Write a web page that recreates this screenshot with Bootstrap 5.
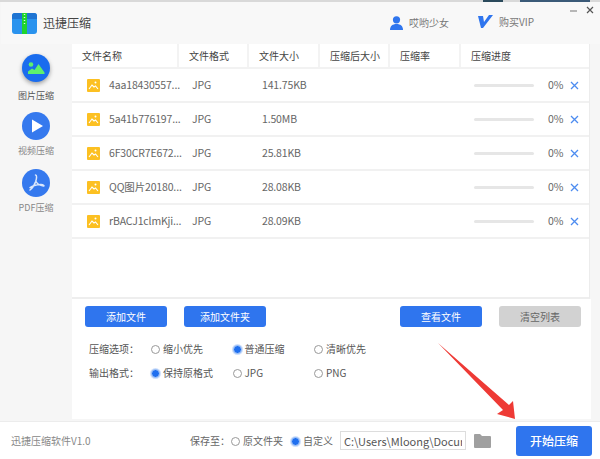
<!DOCTYPE html>
<html lang="zh">
<head>
<meta charset="utf-8">
<title>迅捷压缩</title>
<link href="https://cdn.jsdelivr.net/npm/bootstrap@5.3.0/dist/css/bootstrap.min.css" rel="stylesheet">
<style>
html,body{width:600px;height:459px;overflow:hidden;margin:0}
body{font-family:"Noto Sans CJK SC","Noto Sans",sans-serif;font-size:10px;color:#555;background:#f6f6f6;position:relative}
svg{flex-shrink:0}
.top-strip{height:2px;background:#d9d9d9}
.strip-a{width:20px;margin-left:483px;background:#2b4a5c}
.strip-b{width:70px;margin-left:17px;background:#3b5a78}
.app-win{margin-left:1px;height:457px}
.app-head{height:42px;padding-left:11px;background:#f8f8f8;position:relative}
.app-title{font-size:12px;color:#444;margin-left:6px;line-height:1}
.head-user{position:absolute;left:389px;top:14px}
.head-vip{position:absolute;left:477px;top:13px}
.head-link{font-size:10px;color:#777;margin-left:6px;line-height:1}
.win-btns{position:absolute;right:6px;top:4px}
.app-main{height:377px}
.side-bar{width:71px;background:#f6f6f6;padding-top:10px}
.side-item{height:57.5px;font-size:9px;line-height:12px;color:#888;text-align:center;margin-left:-1px}
.side-item svg{display:block;margin:0 auto 5px}
.side-item.on{color:#555}
.side-item.on svg{margin-bottom:8px;filter:drop-shadow(0 2px 2px rgba(0,0,0,.35))}
.work-col{width:518px}
.list-box{height:255px;background:#fff;border-bottom:2px solid #eee;border-right:1px solid #ececec}
.file-tbl{table-layout:fixed;width:100%;margin:0;border-collapse:collapse}
.file-tbl th,.file-tbl td{padding:0;font-weight:400;font-size:10.5px;letter-spacing:-.15px;color:#555;vertical-align:middle;box-shadow:none;background:#fff;white-space:nowrap}
.file-tbl th{height:24px;padding-left:10px;font-size:10px;letter-spacing:0;border-bottom:2px solid #f2f2f2;border-right:2px solid #f3f3f3;color:#444}
.file-tbl th:last-child{border-right:0}
.file-tbl td{height:34px;border-bottom:2px solid #f1f1f1;color:#666}
.file-tbl .c1{width:106px}.file-tbl .c2{width:70px}.file-tbl .c3{width:71px}.file-tbl .c4{width:70px}.file-tbl .c5{width:71px}
.cell-name{padding-left:15px!important}
.cell-name span{margin-left:9px}
.cell-fmt{padding-left:14px!important}
.cell-size{padding-left:14px!important}
.prog-track{width:60px;height:3px;background:#e6e6e6;border-radius:2px;margin-left:14px}
.prog-val{color:#666;margin-left:14px;width:15px}
.prog-x{margin-left:7px;display:block}
.ctrl-panel{height:120px;background:#fff;position:relative;margin-right:-1px}
.act-btn{width:82px;height:21px;padding:0;font-size:10px;line-height:21px;border:0;border-radius:3px;background:#2f75ee;color:#fff}
.act-btn:hover{background:#2f75ee;color:#fff}
.act-btn.dim,.act-btn.dim:hover{background:#d2d2d2;color:#666}
.btn-line{padding:7px 0 0 13px}
.gap-a{margin-left:17px}.gap-b{margin-left:134px}.gap-c{margin-left:17px}
.opt-line{height:24px;padding-left:17px}
.opt-first{margin-top:9px}
.opt-label{width:62px;font-size:10px;color:#555}
.opt-item{width:81.5px;font-size:10px;color:#555;margin:0;padding:0;min-height:0}
.opt-item .form-check-input,.foot-radio .form-check-input{width:9px;height:9px;float:none;margin:0 3px 0 0;border:1px solid #999;vertical-align:-1px;background-image:none}
.opt-item .form-check-input:checked,.foot-radio .form-check-input:checked{background:#1f6fef;border:1px solid #a9c8f7;box-shadow:0 0 0 1px #cfe0fb}
.app-foot{height:38px;background:#fff;border-top:1px solid #ececec;margin-left:-1px;position:relative}
.foot-ver{font-size:10px;color:#888;margin-left:11px;width:179px}
.foot-lab{font-size:10px;color:#666;width:41px;white-space:nowrap}
.foot-radio{font-size:10px;color:#666;margin:0;padding:0;min-height:0;white-space:nowrap}
.foot-r1{width:60px}.foot-r2{width:49px}
.foot-path{width:126px;height:19px;padding:0 3px;border:1px solid #ddd;border-radius:0;font-size:11px;color:#555;font-family:inherit;box-shadow:none;flex-shrink:0}
.foot-folder{margin-left:8px}
.start-btn{width:76px;height:30px;margin-left:25px;padding:0;border:0;border-radius:3px;background:#2f75ee;color:#fff;font-size:12px;font-weight:500;flex-shrink:0}
.start-btn:hover{background:#2f75ee;color:#fff}
.red-arrow{position:absolute;left:430px;top:335px;pointer-events:none}
</style>
</head>
<body>
<div class="top-strip d-flex"><div class="strip-a"></div><div class="strip-b"></div></div>
<div class="app-win d-flex flex-column">
  <header class="app-head d-flex align-items-center">
    <svg width="25" height="21" viewBox="0 0 25 21"><rect width="25" height="21" rx="3" fill="#2a93ee"/><path d="M0 3a3 3 0 0 1 3-3h19a3 3 0 0 1 3 3v3H0z" fill="#1f74d2"/><rect x="10" width="5" height="21" fill="#1fd42d"/><path d="M12.5 1v1M12.5 4v1M12.5 7v1M12.5 10v1" stroke="#d9ffd9" stroke-width="1.4"/></svg>
    <div class="app-title">迅捷压缩</div>
    <div class="head-user d-flex align-items-center">
      <svg width="13" height="14" viewBox="0 0 13 14"><circle cx="6.5" cy="3.8" r="3.6" fill="#2f75ee"/><path d="M0 14c0-4 2.500-6 6.500-6s6.500 2 6.500 6z" fill="#2f75ee"/></svg>
      <span class="head-link">哎哟少女</span>
    </div>
    <div class="head-vip d-flex align-items-center">
      <svg width="15" height="13" viewBox="0 0 15 13"><path d="M0 1h5l1 6 5-7h4L5 13H3z" fill="#2f75ee"/></svg>
      <span class="head-link">购买VIP</span>
    </div>
    <div class="win-btns d-flex align-items-center gap-2">
      <svg width="8" height="8" viewBox="0 0 8 8"><path d="M0 5h7" stroke="#777" stroke-width="1"/></svg>
      <svg width="8" height="8" viewBox="0 0 8 8"><path d="M1 1l6 6M7 1l-6 6" stroke="#555" stroke-width="1.200"/></svg>
    </div>
  </header>
  <div class="app-main d-flex">
    <nav class="side-bar">
      <div class="side-item on">
        <svg width="28" height="28" viewBox="0 0 28 28"><circle cx="14" cy="14" r="14" fill="#1a6cee"/><circle cx="9" cy="10.500" r="2.300" fill="#5ef06e"/><path d="M6 20v-2.500l4-3 2.500 1.500 4-6 6 8.500V20z" fill="#5ef06e"/></svg>
        图片压缩
      </div>
      <div class="side-item">
        <svg width="28" height="28" viewBox="0 0 28 28"><circle cx="14" cy="14" r="14" fill="#3579ee"/><path d="M10 7.500v13l11-6.500z" fill="#fff"/></svg>
        视频压缩
      </div>
      <div class="side-item">
        <svg width="28" height="28" viewBox="0 0 28 28"><circle cx="14" cy="14" r="14" fill="#3579ee"/><path d="M13.500 6c1.500 0 1.300 3 .2 6.500-1.200 3.500-3 6.500-5.700 8.500M14 12.500c1.500 3 3.500 4 7.500 4.500 1.200.2 0-1.700-3-1.500-4 .3-7.500 1-10.500 3" fill="none" stroke="#dbe7fb" stroke-width="1.500" stroke-linecap="round"/></svg>
        PDF压缩
      </div>
    </nav>
    <div class="work-col d-flex flex-column">
      <div class="list-box">
        <table class="table file-tbl">
          <thead><tr><th class="c1">文件名称</th><th class="c2">文件格式</th><th class="c3">文件大小</th><th class="c4">压缩后大小</th><th class="c5">压缩率</th><th>压缩进度</th></tr></thead>
          <tbody>
            <tr><td class="cell-name"><div class="d-flex align-items-center"><svg width="13" height="13" viewBox="0 0 13 13"><rect width="13" height="13" rx="1" fill="#fcc022"/><circle cx="8.500" cy="3.500" r="1" fill="#fff"/><path d="M2 10l3-4 2 2 1.500-1 2.500 3" fill="none" stroke="#fff" stroke-width="1.100"/></svg><span>4aa18430557...</span></div></td><td class="cell-fmt">JPG</td><td class="cell-size">141.75KB</td><td></td><td></td><td><div class="d-flex align-items-center"><div class="prog-track"></div><div class="prog-val">0%</div><svg class="prog-x" width="9" height="9" viewBox="0 0 9 9"><path d="M1 1l7 7M8 1l-7 7" stroke="#4d8cf0" stroke-width="1.300"/></svg></div></td></tr>
            <tr><td class="cell-name"><div class="d-flex align-items-center"><svg width="13" height="13" viewBox="0 0 13 13"><rect width="13" height="13" rx="1" fill="#fcc022"/><circle cx="8.500" cy="3.500" r="1" fill="#fff"/><path d="M2 10l3-4 2 2 1.500-1 2.500 3" fill="none" stroke="#fff" stroke-width="1.100"/></svg><span>5a41b776197...</span></div></td><td class="cell-fmt">JPG</td><td class="cell-size">1.50MB</td><td></td><td></td><td><div class="d-flex align-items-center"><div class="prog-track"></div><div class="prog-val">0%</div><svg class="prog-x" width="9" height="9" viewBox="0 0 9 9"><path d="M1 1l7 7M8 1l-7 7" stroke="#4d8cf0" stroke-width="1.300"/></svg></div></td></tr>
            <tr><td class="cell-name"><div class="d-flex align-items-center"><svg width="13" height="13" viewBox="0 0 13 13"><rect width="13" height="13" rx="1" fill="#fcc022"/><circle cx="8.500" cy="3.500" r="1" fill="#fff"/><path d="M2 10l3-4 2 2 1.500-1 2.500 3" fill="none" stroke="#fff" stroke-width="1.100"/></svg><span>6F30CR7E672...</span></div></td><td class="cell-fmt">JPG</td><td class="cell-size">25.81KB</td><td></td><td></td><td><div class="d-flex align-items-center"><div class="prog-track"></div><div class="prog-val">0%</div><svg class="prog-x" width="9" height="9" viewBox="0 0 9 9"><path d="M1 1l7 7M8 1l-7 7" stroke="#4d8cf0" stroke-width="1.300"/></svg></div></td></tr>
            <tr><td class="cell-name"><div class="d-flex align-items-center"><svg width="13" height="13" viewBox="0 0 13 13"><rect width="13" height="13" rx="1" fill="#fcc022"/><circle cx="8.500" cy="3.500" r="1" fill="#fff"/><path d="M2 10l3-4 2 2 1.500-1 2.500 3" fill="none" stroke="#fff" stroke-width="1.100"/></svg><span>QQ图片20180...</span></div></td><td class="cell-fmt">JPG</td><td class="cell-size">28.08KB</td><td></td><td></td><td><div class="d-flex align-items-center"><div class="prog-track"></div><div class="prog-val">0%</div><svg class="prog-x" width="9" height="9" viewBox="0 0 9 9"><path d="M1 1l7 7M8 1l-7 7" stroke="#4d8cf0" stroke-width="1.300"/></svg></div></td></tr>
            <tr><td class="cell-name"><div class="d-flex align-items-center"><svg width="13" height="13" viewBox="0 0 13 13"><rect width="13" height="13" rx="1" fill="#fcc022"/><circle cx="8.500" cy="3.500" r="1" fill="#fff"/><path d="M2 10l3-4 2 2 1.500-1 2.500 3" fill="none" stroke="#fff" stroke-width="1.100"/></svg><span>rBACJ1clmKji...</span></div></td><td class="cell-fmt">JPG</td><td class="cell-size">28.09KB</td><td></td><td></td><td><div class="d-flex align-items-center"><div class="prog-track"></div><div class="prog-val">0%</div><svg class="prog-x" width="9" height="9" viewBox="0 0 9 9"><path d="M1 1l7 7M8 1l-7 7" stroke="#4d8cf0" stroke-width="1.300"/></svg></div></td></tr>
          </tbody>
        </table>
      </div>
      <div class="ctrl-panel">
        <div class="btn-line d-flex">
          <button class="btn act-btn">添加文件</button>
          <button class="btn act-btn gap-a">添加文件夹</button>
          <button class="btn act-btn gap-b">查看文件</button>
          <button class="btn act-btn dim gap-c">清空列表</button>
        </div>
        <div class="opt-line opt-first d-flex align-items-center">
          <div class="opt-label">压缩选项：</div>
          <label class="form-check opt-item"><input class="form-check-input" type="radio" name="q">缩小优先</label>
          <label class="form-check opt-item"><input class="form-check-input" type="radio" name="q" checked>普通压缩</label>
          <label class="form-check opt-item"><input class="form-check-input" type="radio" name="q">清晰优先</label>
        </div>
        <div class="opt-line d-flex align-items-center">
          <div class="opt-label">输出格式：</div>
          <label class="form-check opt-item"><input class="form-check-input" type="radio" name="f" checked>保持原格式</label>
          <label class="form-check opt-item"><input class="form-check-input" type="radio" name="f">JPG</label>
          <label class="form-check opt-item"><input class="form-check-input" type="radio" name="f">PNG</label>
        </div>
      </div>
    </div>
  </div>
  <footer class="app-foot d-flex align-items-center">
    <div class="foot-ver">迅捷压缩软件V1.0</div>
    <div class="foot-lab">保存至：</div>
    <label class="form-check foot-radio foot-r1"><input class="form-check-input" type="radio" name="s">原文件夹</label>
    <label class="form-check foot-radio foot-r2"><input class="form-check-input" type="radio" name="s" checked>自定义</label>
    <input class="form-control foot-path" type="text" value="C:\Users\Mloong\Documents">
    <svg class="foot-folder" width="17" height="14" viewBox="0 0 17 14"><path d="M0 1a1 1 0 0 1 1-1h5l2 2h8a1 1 0 0 1 1 1v10a1 1 0 0 1-1 1H1a1 1 0 0 1-1-1z" fill="#a0a0a0"/></svg>
    <button class="btn start-btn">开始压缩</button>
  </footer>
</div>
<svg class="red-arrow" width="90" height="90" viewBox="0 0 90 90"><path d="M8 8 L79 70 L83 66 L85 84 L67 79 L73 75 Z" fill="#ee3a35"/></svg>
<script src="https://cdn.jsdelivr.net/npm/bootstrap@5.3.0/dist/js/bootstrap.bundle.min.js"></script>
</body>
</html>
